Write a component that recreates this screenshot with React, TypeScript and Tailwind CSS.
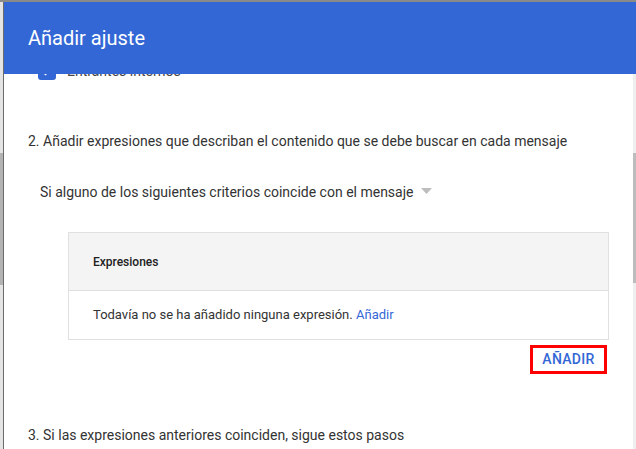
import React from 'react';

const SideStrip: React.FC = () => (
  <div className="w-[4px] flex flex-col bg-[#e4e4e4] border-r border-[#6b6b6b]">
    <div className="h-[151px]" />
    <div className="h-[132px] bg-[#b3b3b3]" />
    <div className="flex-1" />
  </div>
);

const ScrollTrack: React.FC = () => (
  <div className="w-[3px] flex flex-col bg-[#efefef]">
    <div className="h-[79px]" />
    <div className="h-[130px] bg-[#bcbcbc]" />
    <div className="flex-1" />
  </div>
);

export default function App() {
  return (
    <div className="w-[636px] h-[449px] overflow-hidden bg-white flex flex-col font-['Roboto',sans-serif]">
      <div className="h-[2px] bg-[#8a8a8a]" />
      <div className="flex flex-1 min-h-0">
        <SideStrip />
        <div className="flex-1 flex flex-col min-w-0">
          {/* Dialog title */}
          <div className="relative z-10 h-[72px] bg-[#3367d6] flex items-center pl-6 shrink-0">
            <h2 className="text-[20px] text-white font-normal">Añadir ajuste</h2>
          </div>

          <div className="flex flex-1 min-h-0">
            <div className="flex-1 flex flex-col -mt-[12px] overflow-hidden">
              {/* Step 1 tail (scrolled under header) */}
              <div className="flex items-center h-[18px] pl-[34px] gap-[11px]">
                <span className="w-[18px] h-[18px] rounded-[3px] bg-[#3367d6] flex items-center justify-center">
                  <svg width="12" height="12" viewBox="0 0 12 12">
                    <path d="M2 6.5l2.5 2.5L10 3.5" stroke="white" strokeWidth="2" fill="none" />
                  </svg>
                </span>
                <span className="text-[14px] text-[#444]">Entrantes internos</span>
              </div>

              {/* Step 2 */}
              <p className="mt-[51px] pl-6 text-[14px] leading-[20px] text-[#333]">
                2. Añadir expresiones que describan el contenido que se debe buscar en cada mensaje
              </p>

              <div className="mt-[31px] pl-9 flex items-center h-[20px] text-[14px] text-[#333]">
                <span>Si alguno de los siguientes criterios coincide con el mensaje</span>
                <svg width="11" height="6" viewBox="0 0 11 6" className="ml-[8px] -mt-[3px]">
                  <path d="M0 0h11L5.5 6z" fill="#bdbdbd" />
                </svg>
              </div>

              <div className="mt-[30px] ml-[64px] w-[541px] border border-[#e0e0e0]">
                <div className="h-[58px] bg-[#f4f4f4] border-b border-[#e0e0e0] flex items-center pl-6">
                  <span className="text-[12px] font-medium text-[#212121]">Expresiones</span>
                </div>
                <div className="h-[48px] flex items-center pl-6 text-[13px] text-[#333]">
                  <span>
                    Todavía no se ha añadido ninguna expresión.{' '}
                    <span className="text-[#3367d6]">Añadir</span>
                  </span>
                </div>
              </div>

              <div className="flex justify-end w-[603px] mt-[5px]">
                <button className="w-[77px] h-[29px] border-[3px] border-[#ff0000] flex items-center justify-center text-[14px] font-medium text-[#3367d6] tracking-[0.3px]">
                  AÑADIR
                </button>
              </div>

              {/* Step 3 */}
              <p className="mt-[51px] pl-6 text-[14px] leading-[20px] text-[#333]">
                3. Si las expresiones anteriores coinciden, sigue estos pasos
              </p>
            </div>
            <ScrollTrack />
          </div>
        </div>
      </div>
    </div>
  );
}
